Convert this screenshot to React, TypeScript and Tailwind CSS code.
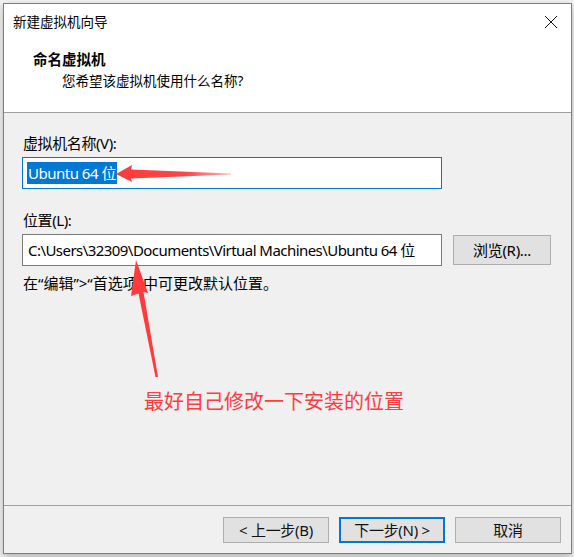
import React from "react";

const ui = "font-['Noto_Sans','Noto_Sans_CJK_SC',sans-serif]";

function CloseIcon() {
  return (
    <svg width="14" height="14" viewBox="0 0 14 14" className="block">
      <path d="M1 1 L13 13 M13 1 L1 13" stroke="#111" strokeWidth="1" fill="none" />
    </svg>
  );
}

function Button({ children, primary = false }: { children: React.ReactNode; primary?: boolean }) {
  return (
    <button
      className={
        primary
          ? "w-[106px] h-[26px] bg-[#e1e1e1] border-2 border-[#0078d7] text-[15px] leading-none text-[#111] flex items-center justify-center tracking-[-0.3px]"
          : "w-[106px] h-[26px] bg-[#e1e1e1] border border-[#adadad] text-[15px] leading-none text-[#111] flex items-center justify-center tracking-[-0.3px]"
      }
    >
      {children}
    </button>
  );
}

export default function App() {
  return (
    <div className={`w-[574px] h-[557px] bg-[#f3f3f3] pl-[3px] pt-[3px] relative overflow-hidden ${ui}`}>
      <div className="w-[569px] h-[551px] border border-[#7e7e7e] bg-[#f0f0f0] flex flex-col shadow-[0_3px_8px_rgba(0,0,0,0.28)]">
        {/* title bar */}
        <div className="h-[36px] bg-white flex items-center justify-between pl-[9px] pr-[13px]">
          <span className="text-[13.5px] leading-[20px] text-black">新建虚拟机向导</span>
          <CloseIcon />
        </div>

        {/* wizard header */}
        <div className="h-[73px] bg-white border-b border-[#a0a0a0] pl-[29px] pt-[9px]">
          <div className="text-[14.5px] leading-[20px] font-bold text-black">命名虚拟机</div>
          <div className="mt-[2px] pl-[29px] text-[13.5px] leading-[20px] text-black">您希望该虚拟机使用什么名称?</div>
        </div>

        {/* form body */}
        <div className="flex-1 pl-[18px] text-[15px] text-black">
          <div className="mt-[20px] pl-[1px] leading-[20px] tracking-[-0.4px]">虚拟机名称(V):</div>
          <div className="mt-[4px] w-[420px] h-[32px] bg-white border border-[#0078d7] flex items-center pl-[4px]">
            <span className="bg-[#0078d7] text-white leading-[22px] px-[1px] tracking-[-0.5px]">Ubuntu 64 位</span>
          </div>

          <div className="mt-[21px] pl-[1px] leading-[20px] tracking-[-0.4px]">位置(L):</div>
          <div className="mt-[4px] flex items-center gap-[11px]">
            <div className="w-[420px] h-[32px] bg-white border border-[#7a7a7a] flex items-center pl-[5px] leading-[22px] whitespace-nowrap overflow-hidden tracking-[-0.55px]">
              C:\Users\32309\Documents\Virtual Machines\Ubuntu 64 位
            </div>
            <button className="w-[98px] h-[30px] bg-[#e1e1e1] border border-[#adadad] text-[15px] leading-none flex items-center justify-center tracking-[-0.3px]">
              浏览(R)...
            </button>
          </div>
          <div className="mt-[7px] pl-[1px] leading-[20px]">在“编辑”&gt;“首选项”中可更改默认位置。</div>
        </div>

        {/* footer */}
        <div className="h-[48px] border-t border-[#a0a0a0] flex justify-end gap-[10px] pt-[11px] pr-[10px]">
          <Button>&lt; 上一步(B)</Button>
          <Button primary>下一步(N) &gt;</Button>
          <Button>取消</Button>
        </div>
      </div>

      {/* red annotations */}
      <svg className="absolute left-0 top-0 pointer-events-none" width="574" height="557" viewBox="0 0 574 557">
        <defs>
          <linearGradient id="tailFade" x1="116" y1="0" x2="232" y2="0" gradientUnits="userSpaceOnUse">
            <stop offset="0" stopColor="#ff3b3b" stopOpacity="1" />
            <stop offset="0.6" stopColor="#ff3b3b" stopOpacity="0.95" />
            <stop offset="1" stopColor="#ff3b3b" stopOpacity="0.35" />
          </linearGradient>
        </defs>
        <polygon
          points="116,174 132,165 131,169.5 231,173.5 231,174.5 131,178.5 132,182"
          fill="url(#tailFade)"
        />
        <polygon
          points="136,260 148,293 143.5,292 158,377 155.5,377 138.5,293.5 131,296"
          fill="#ff3b3b"
        />
      </svg>
      <div className="absolute left-[144px] top-[390px] text-[20px] leading-[24px] text-[#ff3d3d] whitespace-nowrap">
        最好自己修改一下安装的位置
      </div>
    </div>
  );
}
